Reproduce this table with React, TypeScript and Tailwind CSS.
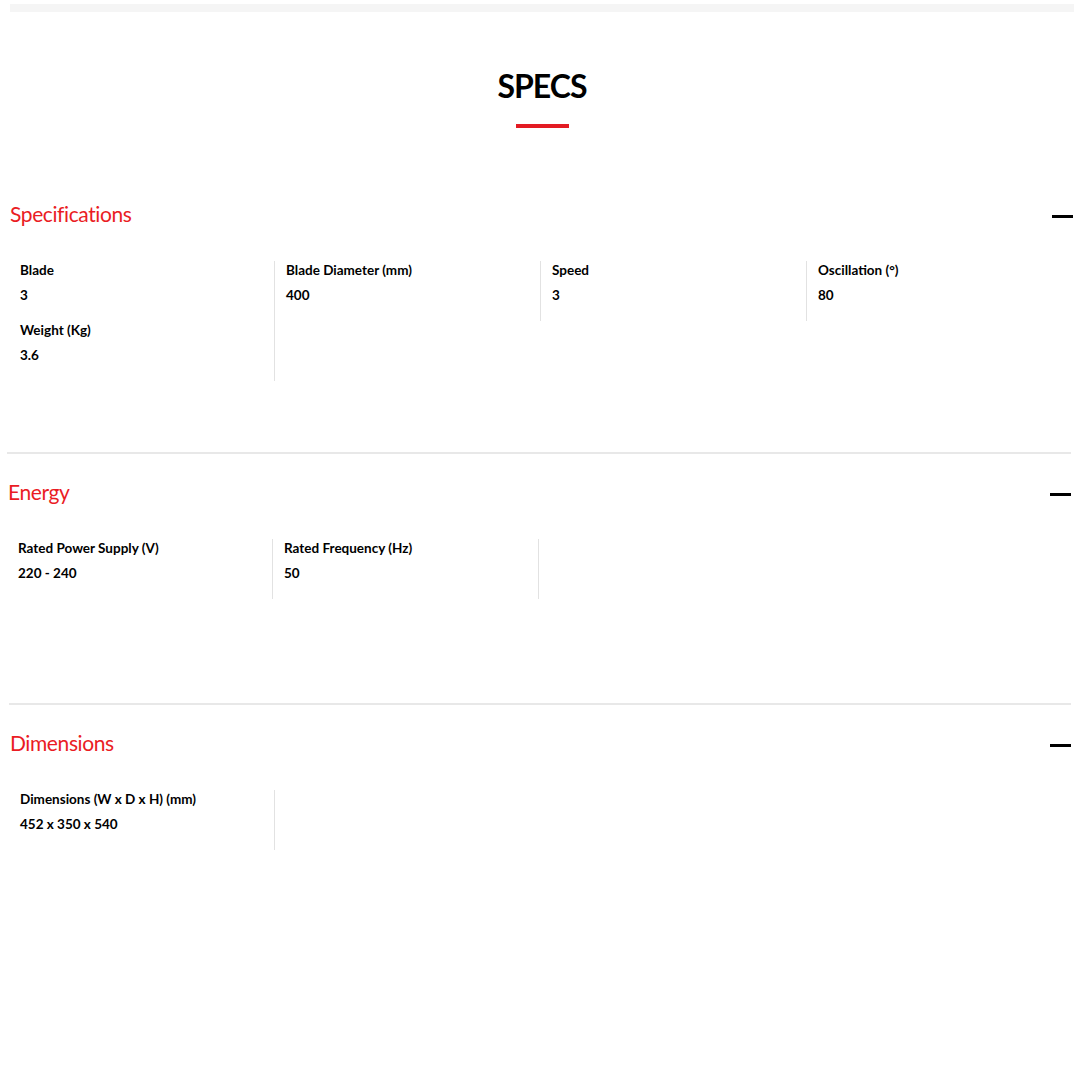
import React from "react";

type Item = { label: string; value: string };

const sections: {
  title: string;
  columns: Item[][];
  shift: string;
  bottom: string;
}[] = [
  {
    title: "Specifications",
    columns: [
      [
        { label: "Blade", value: "3" },
        { label: "Weight (Kg)", value: "3.6" },
      ],
      [{ label: "Blade Diameter (mm)", value: "400" }],
      [{ label: "Speed", value: "3" }],
      [{ label: "Oscillation (°)", value: "80" }],
    ],
    shift: "ml-[9px] mr-[7px]",
    bottom: "pb-[71px]",
  },
  {
    title: "Energy",
    columns: [
      [{ label: "Rated Power Supply (V)", value: "220 - 240" }],
      [{ label: "Rated Frequency (Hz)", value: "50" }],
    ],
    shift: "ml-[7px] mr-[9px]",
    bottom: "pb-[104px]",
  },
  {
    title: "Dimensions",
    columns: [[{ label: "Dimensions (W x D x H) (mm)", value: "452 x 350 x 540" }]],
    shift: "ml-[9px] mr-[9px]",
    bottom: "pb-[120px]",
  },
];

const Section = ({
  title,
  columns,
  shift,
  bottom,
  first,
}: {
  title: string;
  columns: Item[][];
  shift: string;
  bottom: string;
  first: boolean;
}) => {
  return (
    <div
      className={`${shift} ${
        first ? "" : "border-t-2 border-[#e8e8e8]"
      } ${bottom}`}
    >
      <div
        className={`flex items-center justify-between ${
          first ? "pt-[24px]" : "pt-[25px]"
        }`}
      >
        <h3 className="text-[21px] leading-[26px] text-[#ea1c24] tracking-[-0.4px] pl-px">
          {title}
        </h3>
        <div className="w-[21px] h-[3px] bg-black mt-[5px]" />
      </div>
      <div className="grid grid-cols-4 mt-[34px] items-start">
        {columns.map((col, i) => (
          <div
            key={i}
            className={`px-[11px] ${
              i < 3 ? "border-r border-[#e2e2e2]" : ""
            }`}
          >
            {col.map((item) => (
              <div key={item.label} className="pb-[17px]">
                <div className="h-[18px] leading-[18px] text-[13.5px] font-bold text-black">
                  {item.label}
                </div>
                <div className="h-[18px] leading-[18px] mt-[7px] text-[13.5px] font-bold text-black">
                  {item.value}
                </div>
              </div>
            ))}
          </div>
        ))}
      </div>
    </div>
  );
};

const App = () => {
  return (
    <div className="w-[1080px] min-h-[1080px] bg-white font-['Lato',sans-serif]">
      <div className="pt-[4px] ml-[10px] w-[1064px]">
        <div className="h-[8px] bg-[#f5f5f5]" />
      </div>
      <div className="flex flex-col items-center pt-[54px]">
        <h2 className="text-[32px] leading-[40px] font-bold text-black tracking-[-1px] pl-[4px]">
          SPECS
        </h2>
        <div className="w-[53px] h-[4px] bg-[#e31b23] mt-[18px] ml-[4px]" />
      </div>
      <div className="mt-[49px]">
        {sections.map((s, i) => (
          <Section key={s.title} {...s} first={i === 0} />
        ))}
      </div>
    </div>
  );
};

export default App;
